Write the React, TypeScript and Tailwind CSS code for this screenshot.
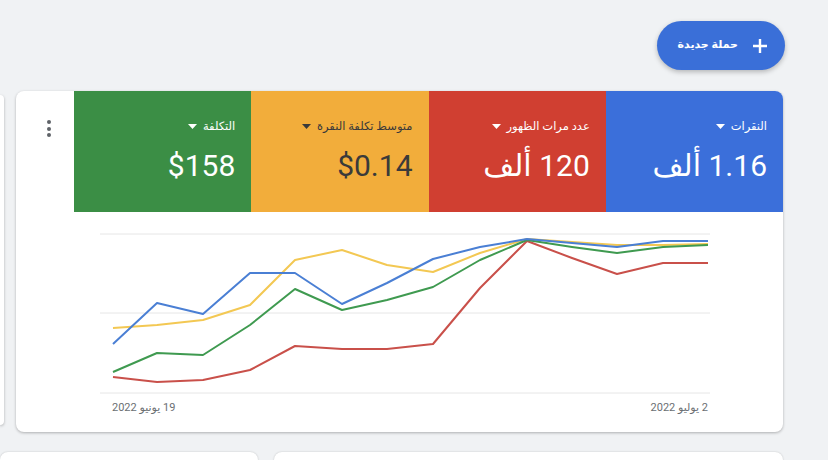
import React from "react";

const xs = [13, 57, 103, 150, 195, 242, 287, 333, 380, 427, 472, 517, 563, 608];

const series = [
  { color: "#f3c853", ys: [95, 92, 87, 72, 27, 17, 32, 39, 20, 6, 9, 12, 12, 11] },
  { color: "#c9504a", ys: [144, 149, 147, 137, 113, 116, 116, 111, 55, 8, 25, 41, 30, 30] },
  { color: "#3f9a50", ys: [139, 120, 122, 92, 56, 77, 67, 54, 27, 7, 14, 20, 14, 12] },
  { color: "#4a7fd4", ys: [111, 70, 81, 40, 40, 71, 50, 26, 14, 6, 10, 14, 8, 8] },
];

const tiles = [
  { label: "النقرات", value: "1.16 ألف", bg: "bg-[#3b6fda]", fg: "text-white" },
  { label: "عدد مرات الظهور", value: "120 ألف", bg: "bg-[#d03f31]", fg: "text-white" },
  { label: "متوسط تكلفة النقرة", value: "$0.14", bg: "bg-[#f2ad3b]", fg: "text-[#3a3a3a]" },
  { label: "التكلفة", value: "$158", bg: "bg-[#3b8e45]", fg: "text-white" },
];

function Caret() {
  return (
    <svg width="9" height="5" viewBox="0 0 9 5" className="shrink-0">
      <path d="M0 0h9L4.5 5z" fill="currentColor" />
    </svg>
  );
}

function Chart() {
  return (
    <svg width="610" height="161" viewBox="0 0 610 161" className="block">
      <line x1="0" y1="1" x2="610" y2="1" stroke="#e6e6e6" strokeWidth="1" />
      <line x1="0" y1="80" x2="610" y2="80" stroke="#e6e6e6" strokeWidth="1" />
      <line x1="0" y1="160" x2="610" y2="160" stroke="#e6e6e6" strokeWidth="1" />
      {series.map((s) => (
        <polyline
          key={s.color}
          fill="none"
          stroke={s.color}
          strokeWidth="2"
          strokeLinejoin="round"
          points={xs.map((x, i) => `${x},${s.ys[i]}`).join(" ")}
        />
      ))}
    </svg>
  );
}

export default function App() {
  return (
    <div
      dir="rtl"
      className="w-[828px] h-[460px] overflow-hidden bg-[#f0f2f4] flex flex-col pt-[21px]"
      style={{ fontFamily: "Roboto, 'DejaVu Sans', sans-serif" }}
    >
      {/* New campaign button */}
      <div className="flex mr-[43px]">
        <button className="h-[49px] w-[128px] rounded-full bg-[#3a6fd8] text-white flex items-center gap-[14px] pr-[17px] shadow-[0_2px_5px_rgba(0,0,0,0.25)]">
          <svg width="16" height="16" viewBox="0 0 16 16">
            <path d="M8 1v14M1 8h14" stroke="white" strokeWidth="2.4" />
          </svg>
          <span className="text-[11px] font-bold">حملة جديدة</span>
        </button>
      </div>

      {/* Main row */}
      <div className="flex mt-[21px] mr-[45px] gap-[12px]">
        <div className="w-[767px] shrink-0 h-[341px] bg-white rounded-lg shadow-[0_1px_3px_rgba(0,0,0,0.28)] overflow-hidden flex flex-col">
          <div className="flex h-[121px]">
            {tiles.map((t) => (
              <div key={t.label} className={`flex-1 ${t.bg} ${t.fg} pr-[16px] pt-[27px] flex flex-col items-start`}>
                <div className="flex items-center gap-[6px] text-[11.5px] leading-[16px]">
                  <span>{t.label}</span>
                  <Caret />
                </div>
                <div className="mt-[14px] text-[30px] leading-[36px]">{t.value}</div>
              </div>
            ))}
            <div className="w-[58px] flex flex-col items-start pr-[23px] pt-[29px] gap-[2.5px]">
              <span className="w-[4px] h-[4px] rounded-full bg-[#5f6368]" />
              <span className="w-[4px] h-[4px] rounded-full bg-[#5f6368]" />
              <span className="w-[4px] h-[4px] rounded-full bg-[#5f6368]" />
            </div>
          </div>

          <div className="mt-[21px] mr-[73px]">
            <Chart />
          </div>
          <div className="flex justify-between mr-[75px] ml-[96px] mt-[6px] text-[11px] text-[#6b6f73]">
            <span>2 يوليو 2022</span>
            <span>19 يونيو 2022</span>
          </div>
        </div>
        <div className="w-[4px] shrink-0 h-[330px] mt-[4px] bg-white rounded-r-md shadow-[0_1px_3px_rgba(0,0,0,0.28)]" />
      </div>

      {/* Bottom cards */}
      <div className="flex mt-[20px] mr-[45px] gap-[16px]">
        <div className="w-[509px] shrink-0 h-[40px] bg-white rounded-lg shadow-[0_0_2px_rgba(0,0,0,0.2)]" />
        <div className="w-[258px] shrink-0 h-[40px] bg-white rounded-lg shadow-[0_0_2px_rgba(0,0,0,0.2)]" />
      </div>
    </div>
  );
}
